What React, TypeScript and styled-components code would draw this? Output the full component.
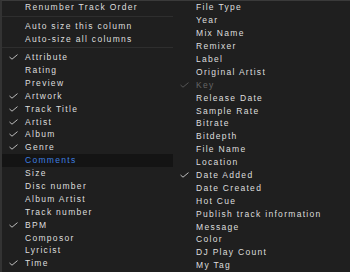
import React from "react";
import styled, { createGlobalStyle } from "styled-components";

const GlobalStyle = createGlobalStyle`
  html, body {
    margin: 0;
    padding: 0;
    background: #1f1f1f;
  }
  body {
    font-family: "Liberation Sans", Arial, sans-serif;
  }
`;

interface Item {
  label: string;
  checked?: boolean;
  active?: boolean;
  disabled?: boolean;
  separator?: boolean;
}

const leftItems: Item[] = [
  { label: "Renumber Track Order" },
  { label: "", separator: true },
  { label: "Auto size this column" },
  { label: "Auto-size all columns" },
  { label: "", separator: true },
  { label: "Attribute", checked: true },
  { label: "Rating" },
  { label: "Preview" },
  { label: "Artwork", checked: true },
  { label: "Track Title", checked: true },
  { label: "Artist", checked: true },
  { label: "Album", checked: true },
  { label: "Genre", checked: true },
  { label: "Comments", active: true },
  { label: "Size" },
  { label: "Disc number" },
  { label: "Album Artist" },
  { label: "Track number" },
  { label: "BPM", checked: true },
  { label: "Composor" },
  { label: "Lyricist" },
  { label: "Time", checked: true },
];

const rightItems: Item[] = [
  { label: "File Type" },
  { label: "Year" },
  { label: "Mix Name" },
  { label: "Remixer" },
  { label: "Label" },
  { label: "Original Artist" },
  { label: "Key", checked: true, disabled: true },
  { label: "Release Date" },
  { label: "Sample Rate" },
  { label: "Bitrate" },
  { label: "Bitdepth" },
  { label: "File Name" },
  { label: "Location" },
  { label: "Date Added", checked: true },
  { label: "Date Created" },
  { label: "Hot Cue" },
  { label: "Publish track information" },
  { label: "Message" },
  { label: "Color" },
  { label: "DJ Play Count" },
  { label: "My Tag" },
];

const Menu = styled.div`
  display: flex;
  width: 350px;
  height: 272px;
  overflow: hidden;
  background: #1f1f1f;
  border-top: 1px solid #3a3a3a;
  border-left: 2px solid #333333;
  box-sizing: border-box;
`;

const Column = styled.div<{ $width: number }>`
  display: flex;
  flex-direction: column;
  width: ${(p) => p.$width}px;
  flex-shrink: 0;
`;

const Row = styled.div<{ $active?: boolean; $disabled?: boolean }>`
  display: flex;
  align-items: center;
  height: 12.9px;
  background: ${(p) => (p.$active ? "#141414" : "transparent")};
  color: ${(p) =>
    p.$active ? "#3d7fe0" : p.$disabled ? "#666666" : "#dedede"};
  font-size: 8.5px;
  letter-spacing: 1.3px;
  white-space: nowrap;
`;

const CheckSlot = styled.span`
  display: flex;
  align-items: center;
  justify-content: center;
  width: 23px;
  height: 12.9px;
  flex-shrink: 0;
`;

const Separator = styled.div`
  height: 5.5px;
  display: flex;
  align-items: center;
  &::after {
    content: "";
    flex: 1;
    height: 1px;
    background: #2e2e2e;
  }
`;

const Check = ({ color }: { color: string }) => (
  <svg width="9" height="6" viewBox="0 0 9 6">
    <polyline
      points="0.5,3 3,5.2 8.5,0.6"
      fill="none"
      stroke={color}
      strokeWidth="1"
    />
  </svg>
);

function MenuColumn({ items, width }: { items: Item[]; width: number }) {
  return (
    <Column $width={width}>
      {items.map((item, i) =>
        item.separator ? (
          <Separator key={i} />
        ) : (
          <Row key={i} $active={item.active} $disabled={item.disabled}>
            <CheckSlot>
              {item.checked && (
                <Check color={item.disabled ? "#555555" : "#bdbdbd"} />
              )}
            </CheckSlot>
            {item.label}
          </Row>
        )
      )}
    </Column>
  );
}

export default function App() {
  return (
    <>
      <GlobalStyle />
      <Menu>
        <MenuColumn items={leftItems} width={171} />
        <MenuColumn items={rightItems} width={177} />
      </Menu>
    </>
  );
}
